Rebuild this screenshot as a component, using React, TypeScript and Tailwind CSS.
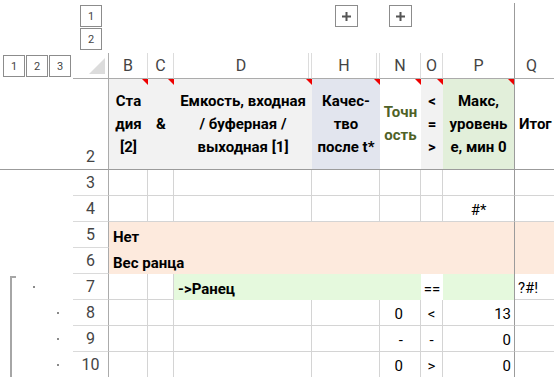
import React from "react";

const F = "font-['Roboto',sans-serif]";

function Tri() {
  return (
    <div className="absolute right-0 top-0 h-[6px] w-[6px] bg-[#ee0000] [clip-path:polygon(0_0,100%_0,100%_100%)]" />
  );
}

function OBtn({ label }: { label: string }) {
  return (
    <div className="flex h-[22px] w-[22px] items-center justify-center border border-[#8c8c8c] bg-white text-[11px] leading-none text-[#444]">
      {label}
    </div>
  );
}

function PlusBtn() {
  return (
    <div className="flex h-[22px] w-[23px] items-center justify-center border border-[#8c8c8c] bg-white">
      <svg width="9" height="9" viewBox="0 0 9 9">
        <rect x="3.5" y="0" width="2" height="9" fill="#555" />
        <rect x="0" y="3.5" width="9" height="2" fill="#555" />
      </svg>
    </div>
  );
}

function RowHdr({ n, tall }: { n: number; tall?: boolean }) {
  return (
    <div
      className={
        "flex items-end justify-center border-r border-[#ababab] pb-[2px] text-[16px] leading-[20px] text-[#444] " +
        (tall ? "border-b border-b-[#9b9b9b]" : "border-b border-b-[#dadada]")
      }
    >
      {n}
    </div>
  );
}

function Outline({ kind }: { kind: "none" | "top" | "mid" }) {
  if (kind === "none") return <div />;
  if (kind === "top")
    return (
      <div className="flex">
        <div className="ml-[10px] mt-[2px] w-[6px] self-stretch border-l-2 border-t-2 border-[#a6a6a6]" />
        <div className="ml-[17px] h-[2px] w-[2px] self-center bg-[#8a8a8a]" />
      </div>
    );
  return (
    <div className="flex">
      <div className="ml-[10px] w-[2px] self-stretch bg-[#a6a6a6]" />
      <div className="ml-[45px] h-[2px] w-[2px] self-center bg-[#8a8a8a]" />
    </div>
  );
}

const cell = "flex items-end pb-[1px] text-[15px] leading-[20px] text-black border-b border-[#d4d4d4] border-r";
const pCell = "flex items-end pb-[1px] text-[15px] leading-[20px] text-black border-b border-b-[#d4d4d4] border-r border-r-[#9b9b9b]";

function Hdr({ l, last, dbl }: { l: string; last?: boolean; dbl?: boolean }) {
  return (
    <div
      className={
        "flex border-b border-b-[#ababab] border-r text-[16px] text-[#444] " +
        (last ? "border-r-[#9b9b9b]" : "border-r-[#dcdcdc]")
      }
    >
      <div className="flex flex-1 items-center justify-center">{l}</div>
      {dbl ? <div className="mr-[2px] w-px bg-[#dcdcdc]" /> : null}
    </div>
  );
}

function DataRow({
  n,
  outline,
  n1,
  o1,
  p1,
  pCenter,
}: {
  n: number;
  outline: "none" | "top" | "mid";
  n1?: string;
  o1?: string;
  p1?: string;
  pCenter?: boolean;
}) {
  return (
    <>
      <Outline kind={outline} />
      <RowHdr n={n} />
      <div className={cell} />
      <div className={cell} />
      <div className={cell} />
      <div className={cell} />
      <div className={cell + " justify-end pr-[17px]"}>{n1}</div>
      <div className={cell + " justify-center"}>{o1}</div>
      <div className={pCell + (pCenter ? " justify-center" : " justify-end pr-[3px]")}>{p1}</div>
      <div className="border-b border-[#d4d4d4]" />
    </>
  );
}

export default function App() {
  return (
    <div
      className={
        F +
        " grid h-[377px] w-[554px] overflow-hidden bg-white grid-cols-[73px_36px_39px_26px_138px_68px_41px_22px_72px_1fr] grid-rows-[53px_26px_91px_repeat(8,26px)]"
      }
    >
      {/* top outline area */}
      <div />
      <div className="flex flex-col gap-px pl-[7px] pt-[5px]">
        <OBtn label="1" />
        <OBtn label="2" />
      </div>
      <div />
      <div />
      <div />
      <div className="flex justify-center pt-[5px]">
        <PlusBtn />
      </div>
      <div className="flex justify-center pt-[5px]">
        <PlusBtn />
      </div>
      <div />
      <div className="flex justify-end pt-[3px]">
        <div className="h-full border-r border-[#9b9b9b]" />
      </div>
      <div />

      {/* column header row */}
      <div className="flex items-center gap-px pl-[3px]">
        <OBtn label="1" />
        <OBtn label="2" />
        <OBtn label="3" />
      </div>
      <div className="flex items-end justify-end border-b border-r border-[#ababab] pb-[4px] pr-[3px]">
        <div className="h-[16px] w-[16px] bg-[#dcdcdc] [clip-path:polygon(100%_0,100%_100%,0_100%)]" />
      </div>
      <Hdr l="B" />
      <Hdr l="C" />
      <Hdr l="D" dbl />
      <Hdr l="H" dbl />
      <Hdr l="N" />
      <Hdr l="O" />
      <Hdr l="P" last />
      <div className="flex items-center border-b border-b-[#ababab] pl-[11px] text-[16px] text-[#444]">Q</div>

      {/* row 2 */}
      <div className="border-b border-[#9b9b9b]" />
      <RowHdr n={2} tall />
      <div className="relative flex items-center justify-center border-b border-[#9b9b9b] bg-[#f2f2f2] text-center text-[15px] font-bold leading-[23px]">
        <Tri />
        <div>
          Ста
          <br />
          дия
          <br />
          [2]
        </div>
      </div>
      <div className="relative flex items-center justify-center border-b border-[#9b9b9b] bg-[#f2f2f2] text-[15px] font-bold leading-[23px]">
        <Tri />
        &amp;
      </div>
      <div className="relative flex items-center justify-center border-b border-[#9b9b9b] bg-[#f2f2f2] text-center text-[15px] font-bold leading-[23px] whitespace-nowrap">
        <Tri />
        <div>
          Емкость, входная
          <br />
          / буферная /
          <br />
          выходная [1]
        </div>
      </div>
      <div className="relative flex items-center justify-center border-b border-[#9b9b9b] bg-[#e2e5ee] text-center text-[15px] font-bold leading-[23px]">
        <Tri />
        <div>
          Качес-
          <br />
          тво
          <br />
          после t*
        </div>
      </div>
      <div className="relative flex items-center justify-center border-b border-[#9b9b9b] bg-white text-center text-[15px] font-bold leading-[23px] text-[#4f6228]">
        <Tri />
        <div>
          Точн
          <br />
          ость
        </div>
      </div>
      <div className="relative flex items-center justify-center border-b border-[#9b9b9b] bg-[#f2f2f2] text-center text-[15px] font-bold leading-[23px]">
        <Tri />
        <div>
          &lt;
          <br />=
          <br />
          &gt;
        </div>
      </div>
      <div className="relative flex items-center justify-center border-b border-r border-[#9b9b9b] bg-[#e2efda] text-center text-[15px] font-bold leading-[23px] whitespace-nowrap">
        <Tri />
        <div>
          Макс,
          <br />
          уровень
          <br />
          е, мин 0
        </div>
      </div>
      <div className="flex items-center border-b border-[#9b9b9b] pl-[4px] text-[15px] font-bold">Итог</div>

      {/* row 3 */}
      <DataRow n={3} outline="none" />
      {/* row 4 */}
      <DataRow n={4} outline="none" p1="#*" pCenter />

      {/* row 5 */}
      <div />
      <RowHdr n={5} />
      <div className="col-span-7 flex items-end border-r border-[#9b9b9b] bg-[#fdeadd] pb-[1px] pl-[4px] text-[15px] font-bold leading-[20px] whitespace-nowrap">
        Нет
      </div>
      <div className="bg-[#fdeadd]" />

      {/* row 6 */}
      <div />
      <RowHdr n={6} />
      <div className="col-span-7 flex items-end border-r border-[#9b9b9b] bg-[#fdeadd] pb-[1px] pl-[4px] text-[15px] font-bold leading-[20px] whitespace-nowrap">
        Вес ранца
      </div>
      <div className="bg-[#fdeadd]" />

      {/* row 7 */}
      <Outline kind="top" />
      <RowHdr n={7} />
      <div className={cell} />
      <div className={cell} />
      <div className="col-span-3 flex items-end bg-[#e5f9dd] pb-[1px] pl-[4px] text-[15px] font-bold leading-[20px] whitespace-nowrap">
        -&gt;Ранец
      </div>
      <div className="flex items-end justify-center pb-[1px] text-[15px] leading-[20px]">==</div>
      <div className="border-r border-[#9b9b9b] bg-[#e5f9dd]" />
      <div className="flex items-end border-b border-[#d4d4d4] pb-[1px] pl-[3px] text-[15px] leading-[20px]">?#!</div>

      <DataRow n={8} outline="mid" n1="0" o1="<" p1="13" />
      <DataRow n={9} outline="mid" n1="-" o1="-" p1="0" />
      <DataRow n={10} outline="mid" n1="0" o1=">" p1="0" />
    </div>
  );
}
